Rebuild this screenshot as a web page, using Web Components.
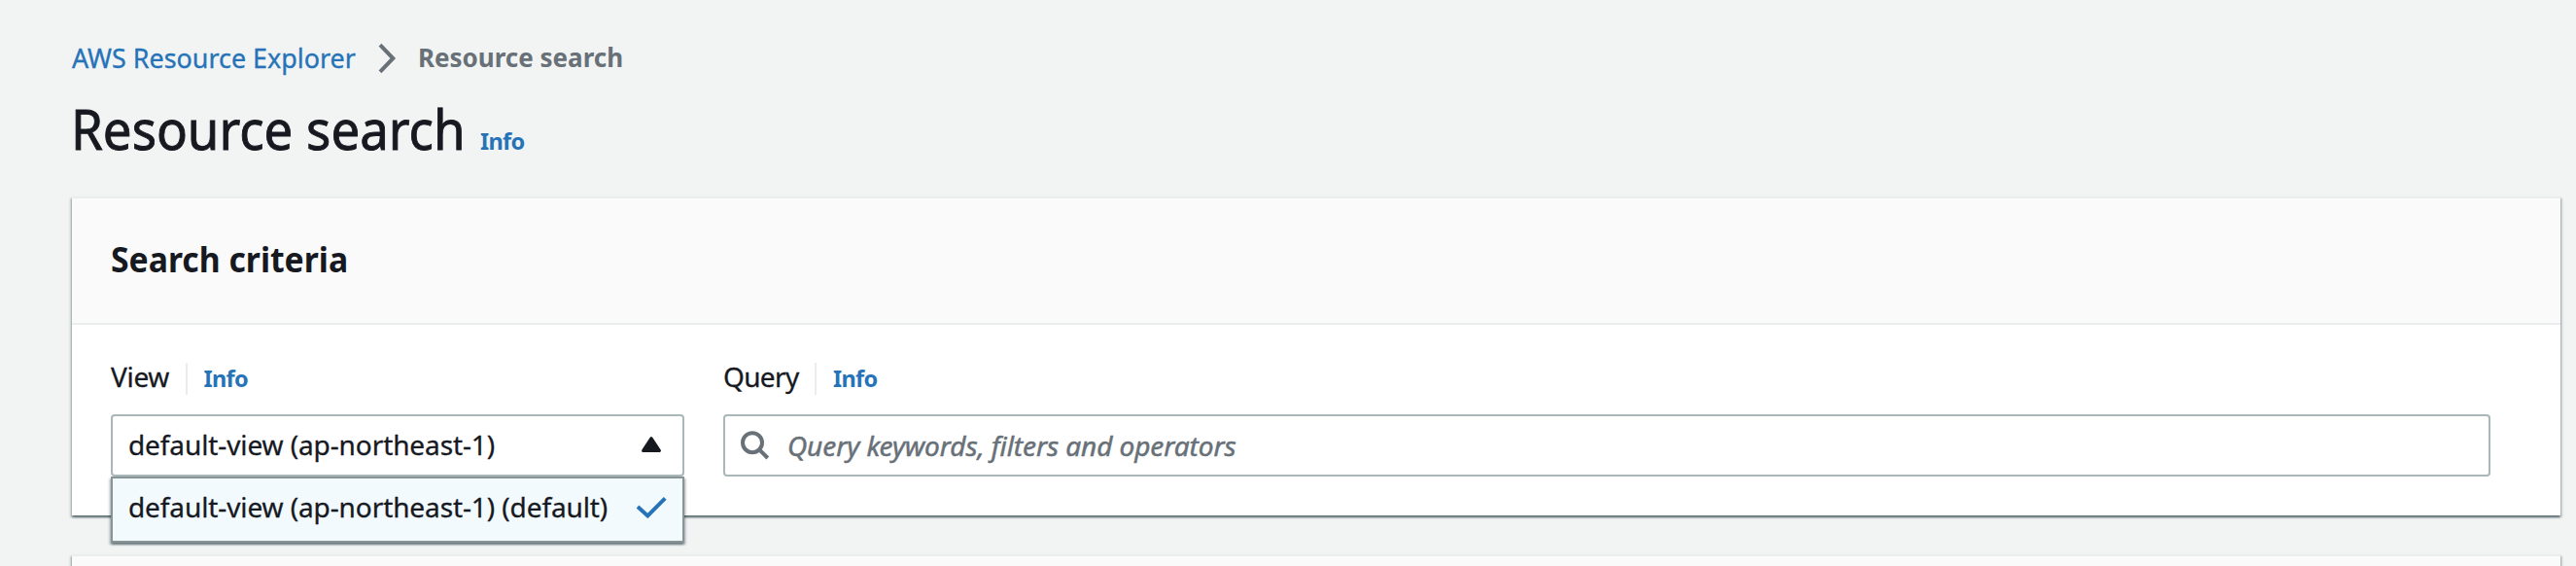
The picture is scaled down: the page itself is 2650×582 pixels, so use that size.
<!DOCTYPE html>
<html lang="en">
<head>
<meta charset="utf-8">
<title>Resource search</title>
<style>
html,body{margin:0;height:100%;overflow:hidden;background:#f2f4f4}
body{font:400 28px/40px "Noto Sans","Open Sans",sans-serif;color:#16191f;font-kerning:normal}
</style>
</head>
<body>
<resource-page></resource-page>
<script>
const define = (name, html) => customElements.define(name, class extends HTMLElement {
  constructor() {
    super();
    const t = document.createElement('template');
    t.innerHTML = html;
    this.attachShadow({ mode: 'open' }).append(t.content.cloneNode(true));
  }
});

define('info-link', `
<style>
:host{display:inline-block;color:#2673b8;font-size:23.5px;font-weight:700;letter-spacing:-.7px}
</style><slot>Info</slot>`);

define('bread-crumbs', `
<style>
:host{display:flex;align-items:center;height:40px;white-space:nowrap}
.link{color:#2673b8;-webkit-text-stroke:.35px;width:315px;transform:scaleX(.96);transform-origin:0 50%}
.here{color:#687078;font-weight:700;font-size:27.5px;transform:scaleX(.945);transform-origin:0 50%}
svg{display:block;width:20px;height:32px;margin-right:21px;margin-top:2px}
</style>
<span class="link">AWS Resource Explorer</span>
<svg viewBox="0 0 20 32" fill="none" stroke="#687078" stroke-width="4"><path d="M2 2.2 15.3 16 2 29.8"/></svg>
<span class="here">Resource search</span>`);

define('page-title', `
<style>
:host{display:flex;align-items:baseline;white-space:nowrap}
h1{margin:0 0 0 -1px;font-size:56px;line-height:72px;font-weight:400;-webkit-text-stroke:.9px;width:421px;transform:scaleX(.943);transform-origin:0 50%}
</style>
<h1><slot></slot></h1><info-link></info-link>`);

define('content-card', `
<style>
:host{display:block;background:#fff;border-top:2px solid #eaeded;
box-shadow:0 2px 2px rgba(0,28,36,.5),2px 2px 2px rgba(0,28,36,.15),-2px 2px 2px rgba(0,28,36,.15)}
header{height:128px;box-sizing:border-box;padding:0 40px;background:#fafafa}
h2{margin:0;font-size:35.5px;line-height:124px;font-weight:700;transform:scaleX(.95);transform-origin:0 50%}
.body{border-top:2px solid #eaeded;padding:37px 72px 40px 40px}
</style>
<header><h2><slot name="title"></slot></h2></header>
<div class="body"><slot></slot></div>`);

define('form-field', `
<style>
:host{display:flex;flex-direction:column;gap:22px;min-width:0}
.label{display:flex;height:33px;line-height:33px;align-items:baseline;-webkit-text-stroke:.3px}
.name{letter-spacing:var(--ls,-.3px)}
info-link{margin-left:16.5px;padding-left:17px;border-left:2px solid #eaeded;line-height:33px;height:33px;-webkit-text-stroke:0}
</style>
<div class="label"><span class="name"><slot name="label"></slot></span><info-link></info-link></div>
<slot></slot>`);

define('view-select', `
<style>
:host{display:block;position:relative;height:64px;-webkit-text-stroke:.3px;white-space:nowrap}
.trigger{box-sizing:border-box;height:64px;border:2px solid #aab7b8;border-radius:4px;background:#fff;display:flex;align-items:center;justify-content:space-between;padding:0 22px 2px 16px}
.menu{box-sizing:border-box;position:absolute;top:64px;left:0;width:100%;height:68px;border:2px solid #879596;background:#f2fafe;display:flex;align-items:center;justify-content:space-between;padding:0 16px 6px;box-shadow:0 2px 2px rgba(0,28,36,.4),2px 2px 2px rgba(0,28,36,.15),-2px 2px 2px rgba(0,28,36,.15)}
span{letter-spacing:-.1px}
svg{display:block}
</style>
<div class="trigger"><span>default-view (ap-northeast-1)</span>
<svg width="20" height="16" viewBox="0 0 20 16" fill="#16191f" stroke="#16191f" stroke-width="3" stroke-linejoin="round"><path d="M10 1.7 18.4 14.4H1.6Z"/></svg></div>
<div class="menu"><span>default-view (ap-northeast-1) (default)</span>
<svg width="32" height="24" viewBox="0 0 32 24" fill="none" stroke="#2673b8" stroke-width="4"><path d="M2 12 12.3 21.4 30.2 3.4"/></svg></div>`);

define('query-input', `
<style>
:host{display:flex;box-sizing:border-box;height:64px;align-items:center;border:2px solid #aab7b8;border-radius:4px;background:#fff;padding-left:16px;color:#687078;white-space:nowrap}
svg{display:block;margin-right:18px}
span{font-style:italic;-webkit-text-stroke:.5px;letter-spacing:-.08px}
</style>
<svg width="30" height="30" viewBox="0 0 30 30" fill="none" stroke="#687078" stroke-width="4"><circle cx="12" cy="12.2" r="10"/><path d="M19.4 19.6 27.8 28"/></svg>
<span>Query keywords, filters and operators</span>`);

define('resource-page', `
<style>
:host{display:block;padding:39px 16px 0 74px;height:543px;overflow:hidden}
page-title{margin-top:17px}
content-card{margin-top:34px}
content-card + content-card{margin-top:40px}
.fields{display:grid;grid-template-columns:590px 1fr;gap:40px}
</style>
<bread-crumbs></bread-crumbs>
<page-title>Resource search</page-title>
<content-card>
  <span slot="title">Search criteria</span>
  <div class="fields">
    <form-field><span slot="label">View</span><view-select></view-select></form-field>
    <form-field style="--ls:-.65px"><span slot="label">Query</span><query-input></query-input></form-field>
  </div>
</content-card>
<content-card></content-card>`);
</script>
</body>
</html>
